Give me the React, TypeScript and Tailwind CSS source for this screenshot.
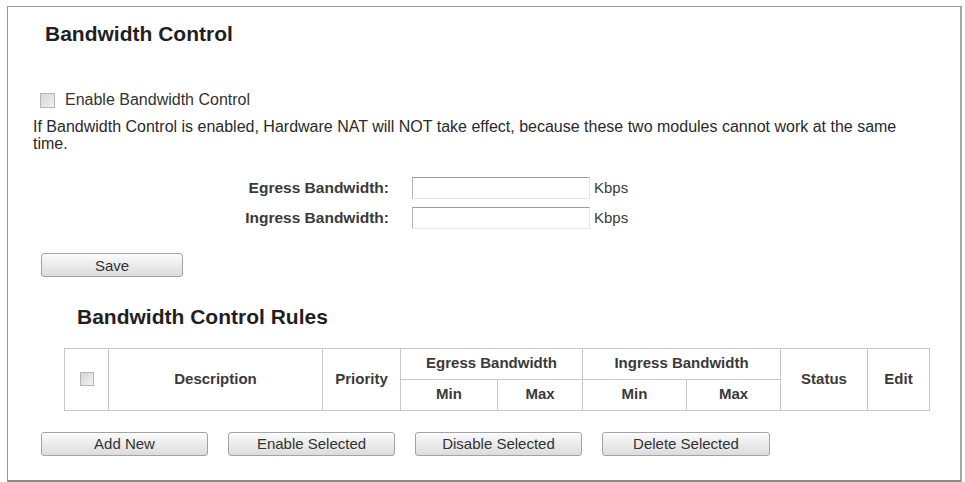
import React from "react";

const font = { fontFamily: '"Liberation Sans", Arial, sans-serif' };

function Btn({ label, w }: { label: string; w: string }) {
  return (
    <button
      className={`${w} h-[24px] rounded-[3px] border border-[#a3a3a3] bg-gradient-to-b from-[#fbfbfb] to-[#dcdcdc] text-[15px] leading-none text-[#333] shadow-[inset_0_1px_0_#ffffff]`}
    >
      {label}
    </button>
  );
}

function Check({ size }: { size: string }) {
  return (
    <span
      className={`inline-block ${size} border border-[#b5b5b5] bg-gradient-to-br from-[#d6d6d6] to-[#f2f2f2]`}
    />
  );
}

const th = "border border-[#c9c9c9] text-[15px] font-bold text-[#3a3a3a] text-center align-middle p-0";

export default function App() {
  return (
    <div className="w-[965px] h-[482px] bg-white" style={font}>
      <div className="ml-[7px] mt-[6px] w-[955px] h-[476px] border border-[#999] border-r-2 border-b-2 border-r-[#a8a8a8] border-b-[#8a8a8a] flex flex-col">
        <h1 className="ml-[37px] mt-[15px] text-[21px] leading-[24px] font-bold text-[#1f1f1f]">
          Bandwidth Control
        </h1>

        <div className="ml-[32px] mt-[46px] flex items-center h-[16px]">
          <Check size="w-[15px] h-[15px]" />
          <span className="ml-[10px] text-[16px] text-[#333]">Enable Bandwidth Control</span>
        </div>

        <p className="ml-[25px] mt-[10px] w-[910px] text-[16px] leading-[17px] text-[#2a2a2a]">
          If Bandwidth Control is enabled, Hardware NAT will NOT take effect, because these two modules cannot work at the same
          <br />
          time.
        </p>

        <div className="mt-[25px] flex flex-col gap-[8px]">
          {["Egress Bandwidth:", "Ingress Bandwidth:"].map((l) => (
            <div key={l} className="flex items-center h-[22px]">
              <span className="w-[381px] text-right text-[15.5px] font-bold text-[#3a3a3a]">{l}</span>
              <span className="ml-[23px] w-[178px] h-[22px] border border-t-[#9d9d9d] border-l-[#b3b3b3] border-r-[#e6e6e6] border-b-[#e6e6e6] bg-white" />
              <span className="ml-[4px] text-[15px] text-[#3a3a3a]">Kbps</span>
            </div>
          ))}
        </div>

        <div className="ml-[33px] mt-[24px]">
          <Btn label="Save" w="w-[142px]" />
        </div>

        <h2 className="ml-[69px] mt-[27px] text-[21px] leading-[24px] font-bold text-[#1f1f1f]">
          Bandwidth Control Rules
        </h2>

        <div className="ml-[56px] mt-[19px]">
          <table className="table-fixed border-collapse w-[865px] border border-[#bdbdbd]">
            <colgroup>
              <col className="w-[44px]" />
              <col className="w-[214px]" />
              <col className="w-[78px]" />
              <col className="w-[97px]" />
              <col className="w-[85px]" />
              <col className="w-[104px]" />
              <col className="w-[94px]" />
              <col className="w-[87px]" />
              <col className="w-[62px]" />
            </colgroup>
            <tbody>
              <tr className="h-[31px]">
                <td rowSpan={2} className={th}>
                  <div className="flex justify-center">
                    <Check size="w-[14px] h-[14px]" />
                  </div>
                </td>
                <td rowSpan={2} className={th}>Description</td>
                <td rowSpan={2} className={th}>Priority</td>
                <td colSpan={2} className={th}>Egress Bandwidth</td>
                <td colSpan={2} className={th}>Ingress Bandwidth</td>
                <td rowSpan={2} className={th}>Status</td>
                <td rowSpan={2} className={th}>Edit</td>
              </tr>
              <tr className="h-[31px]">
                <td className={th}>Min</td>
                <td className={th}>Max</td>
                <td className={th}>Min</td>
                <td className={th}>Max</td>
              </tr>
            </tbody>
          </table>
        </div>

        <div className="ml-[33px] mt-[21px] flex gap-[20px]">
          <Btn label="Add New" w="w-[167px]" />
          <Btn label="Enable Selected" w="w-[167px]" />
          <Btn label="Disable Selected" w="w-[167px]" />
          <Btn label="Delete Selected" w="w-[168px]" />
        </div>
      </div>
    </div>
  );
}
